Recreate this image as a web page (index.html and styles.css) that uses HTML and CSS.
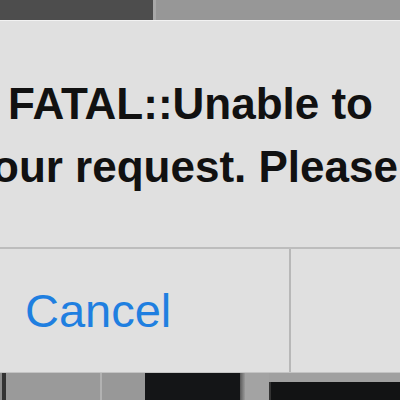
FILE: index.html
```html
<!DOCTYPE html>
<html lang="en">
<head>
  <meta charset="UTF-8" />
  <meta name="viewport" content="width=device-width, initial-scale=1.0"/>
  <title>Alert</title>
  <link rel="stylesheet" href="styles.css">
</head>
<body>

<div class="strip top-strip">
  <div class="dark-block"></div>
  <div class="edge"></div>
  <div class="gray-block"></div>
</div>

<div class="alert">
  <div class="message">
    <div class="line first">FATAL::Unable to</div>
    <div class="line second">our request. Please</div>
  </div>
  <div class="buttons">
    <div class="btn cancel">Cancel</div>
    <div class="btn other"></div>
  </div>
</div>

<div class="strip bottom-strip">
  <div class="b-gray-thin"></div>
  <div class="b-dark-thin"></div>
  <div class="b-gray wide"></div>
  <div class="b-light-line"></div>
  <div class="b-gray narrow"></div>
  <div class="b-black"></div>
  <div class="b-shade"></div>
  <div class="b-gray2"></div>
  <div class="b-screen"><div class="b-screen-inner"></div></div>
</div>

</body>
</html>
```
FILE: styles.css
```css
html, body {
  margin: 0;
  padding: 0;
  width: 400px;
  height: 400px;
  overflow: hidden;
  background: #e0e0e0;
  font-family: "Liberation Sans", Arial, sans-serif;
}
.strip {
  display: flex;
}
.top-strip {
  height: 20px;
}
.dark-block {
  width: 153px;
  background: #4d4d4d;
}
.edge {
  width: 3px;
  background: #a8a8a8;
}
.gray-block {
  flex: 1;
  background: #979797;
}
.alert {
  height: 353px;
  background: #e0e0e0;
  border-top: 1px solid #f2f2f2;
  border-bottom: 1px solid #c4c4c4;
  box-sizing: border-box;
  display: flex;
  flex-direction: column;
}
.message {
  padding-top: 51px;
  height: 228px;
  box-sizing: border-box;
  border-bottom: 2px solid #bdbdbd;
  color: #111;
  font-size: 44px;
  font-weight: bold;
  line-height: 63px;
  white-space: nowrap;
}
.line.first {
  padding-left: 8px;
}
.line.second {
  margin-left: -8px;
}
.buttons {
  flex: 1;
  display: flex;
}
.btn {
  display: flex;
  align-items: center;
  font-size: 47px;
  line-height: 47px;
}
.cancel {
  width: 291px;
  padding-left: 25px;
  box-sizing: border-box;
  color: #1f7fe0;
  border-right: 2px solid #b8b8b8;
}
.other {
  flex: 1;
}
.bottom-strip {
  height: 27px;
}
.b-gray-thin {
  width: 2px;
  background: #8c8c8c;
}
.b-dark-thin {
  width: 4px;
  background: #333;
}
.b-gray {
  background: #9a9a9a;
}
.b-gray.wide {
  width: 94px;
}
.b-light-line {
  width: 2px;
  background: #b2b2b2;
}
.b-gray.narrow {
  width: 43px;
  background: #989898;
}
.b-black {
  width: 95px;
  background: #141517;
}
.b-shade {
  width: 5px;
  background: linear-gradient(to right, #5a5a5a, #9a9a9a);
}
.b-gray2 {
  width: 24px;
  background: #a3a3a3;
}
.b-screen {
  flex: 1;
  background: #a0a0a0;
  padding-top: 9px;
}
.b-screen-inner {
  height: 100%;
  background: #121314;
  border-left: 2px solid #333;
}
```
